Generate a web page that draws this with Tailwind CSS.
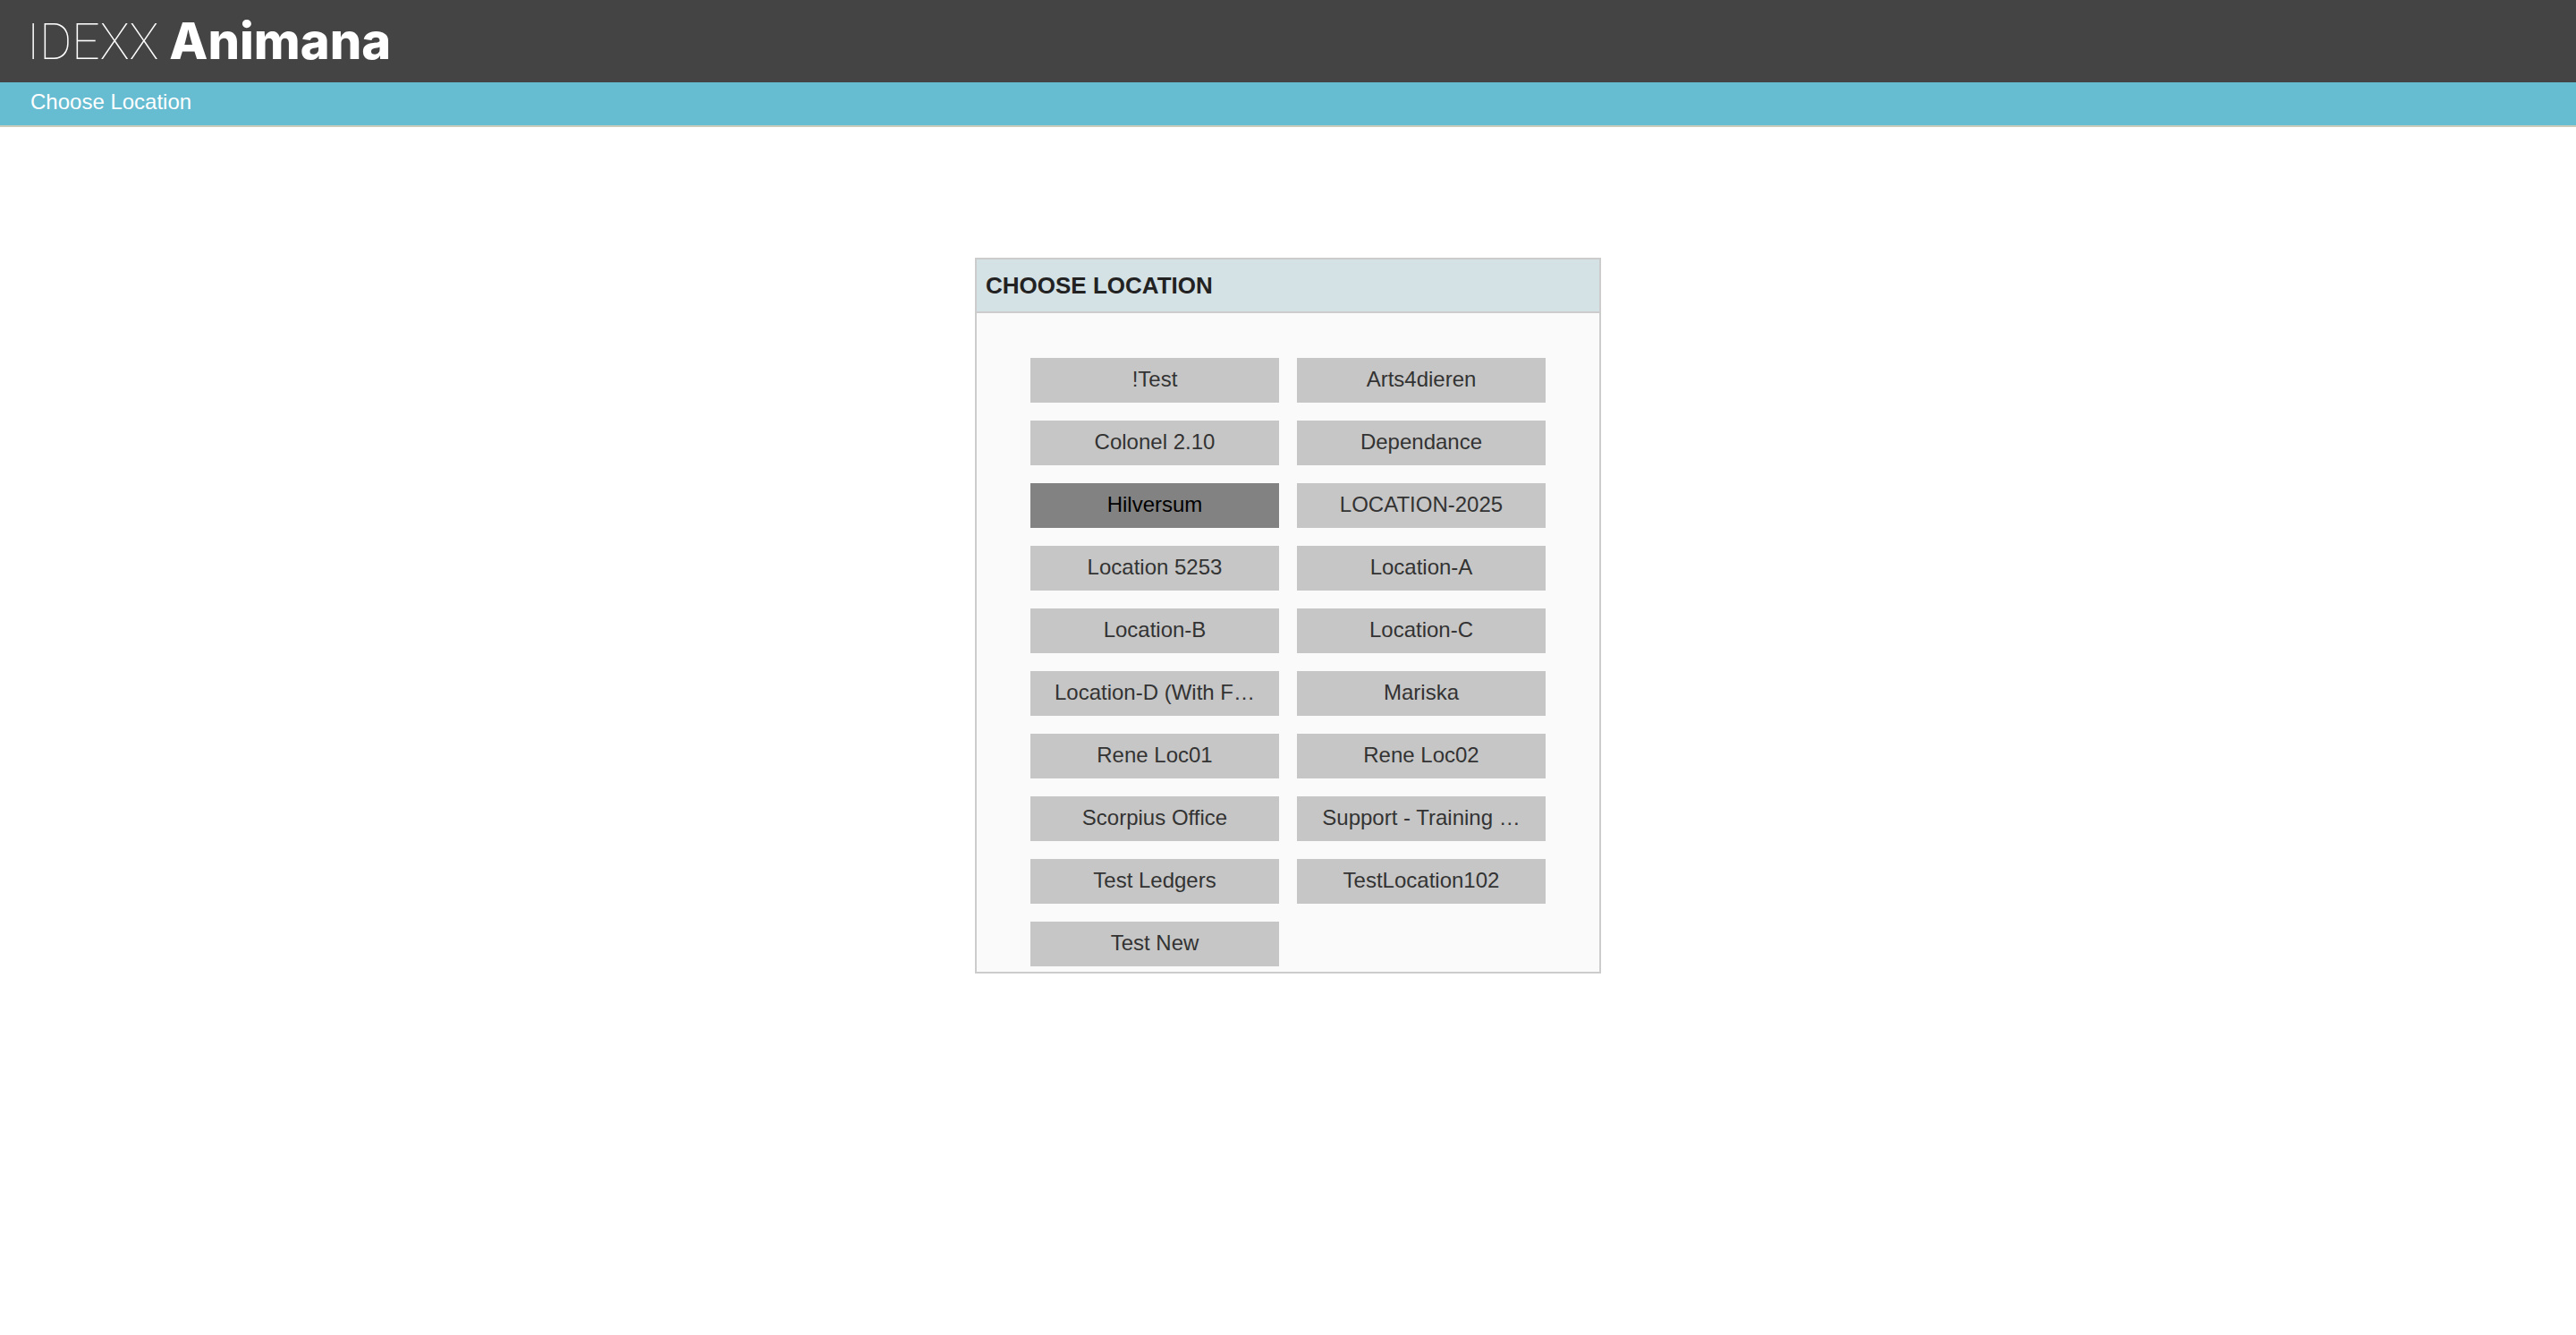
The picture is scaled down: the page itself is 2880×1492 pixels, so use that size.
<!DOCTYPE html>
<html lang="en">
<head>
<meta charset="utf-8">
<meta name="viewport" content="width=device-width, initial-scale=1">
<title>IDEXX Animana - Choose Location</title>
<script src="https://cdn.jsdelivr.net/npm/@tailwindcss/browser@4"></script>
</head>
<body class="bg-white font-['Liberation_Sans',Arial,sans-serif] text-[#333333]">
<header class="flex h-[92px] items-center bg-[#444444] px-[30px]">
  <a href="#" class="flex items-baseline gap-3 text-[56px] leading-[92px] text-white">
    <span class="font-['Roboto',sans-serif] text-[55px] font-thin">IDEXX</span>
    <span class="font-['Inter',sans-serif] font-extrabold">Animana</span>
  </a>
</header>
<nav class="h-[50px] border-b-2 border-[#ccccbb] bg-[#66bcd1] px-[34px] text-2xl leading-[44px] text-white">Choose Location</nav>
<main class="px-8 pt-[146px] pb-16">
  <section class="mx-auto max-w-[700px] border-2 border-[#cccccc] bg-[#fafafa]">
    <h1 class="border-b-2 border-[#cccccc] bg-[#d4e1e5] px-[10px] text-[26px] leading-[58px] font-bold text-[#222222]">CHOOSE LOCATION</h1>
    <div class="grid grid-cols-2 gap-5 px-[60px] pt-[50px] pb-[6px] text-2xl leading-[48px] *:h-[50px] *:cursor-pointer *:bg-[#c6c6c6] *:pb-[2px]">
      <button type="button">!Test</button>
      <button type="button">Arts4dieren</button>
      <button type="button">Colonel 2.10</button>
      <button type="button">Dependance</button>
      <button type="button" class="bg-[#828282]! text-black" aria-pressed="true">Hilversum</button>
      <button type="button">LOCATION-2025</button>
      <button type="button">Location 5253</button>
      <button type="button">Location-A</button>
      <button type="button">Location-B</button>
      <button type="button">Location-C</button>
      <button type="button">Location-D (With F…</button>
      <button type="button">Mariska</button>
      <button type="button">Rene Loc01</button>
      <button type="button">Rene Loc02</button>
      <button type="button">Scorpius Office</button>
      <button type="button">Support - Training …</button>
      <button type="button">Test Ledgers</button>
      <button type="button">TestLocation102</button>
      <button type="button">Test New</button>
    </div>
  </section>
</main>
</body>
</html>
